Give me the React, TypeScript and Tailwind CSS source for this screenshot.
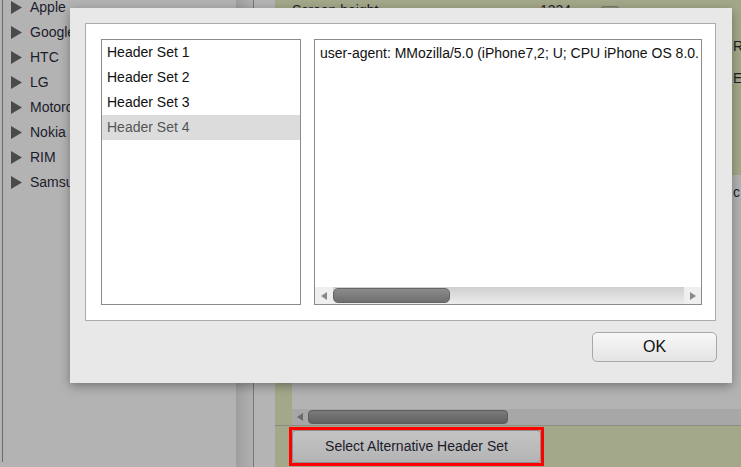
import { useState } from "react"

const vendors = ["Apple", "Google", "HTC", "LG", "Motorola", "Nokia", "RIM", "Samsung"]
const headerSets = ["Header Set 1", "Header Set 2", "Header Set 3", "Header Set 4"]

function Arrow({ dir, color }: { dir: "left" | "right"; color: string }) {
  return (
    <svg width="6" height="8" viewBox="0 0 6 8">
      {dir === "left" ? (
        <polygon points="6,0 6,8 0,4" fill={color} />
      ) : (
        <polygon points="0,0 0,8 6,4" fill={color} />
      )}
    </svg>
  )
}

export default function App() {
  const [selected, setSelected] = useState(3)

  return (
    <div
      className="relative w-[741px] h-[467px] overflow-hidden flex text-[14px]"
      style={{ fontFamily: '"Liberation Sans", Arial, sans-serif' }}
    >
      {/* device tree */}
      <div className="w-[236px] shrink-0 h-full bg-[#b3b3b3] pl-[2px]">
        <div className="h-full border-l border-[#6b6b6b] -mt-[5px]">
          {vendors.map((v) => (
            <div key={v} className="h-[25px] flex items-center gap-[8px] pl-[8px] text-[#1c1c2c]">
              <svg width="11" height="13" viewBox="0 0 11 13">
                <polygon points="0,0 11,6.5 0,13" fill="#4a4a4a" />
              </svg>
              <span>{v}</span>
            </div>
          ))}
        </div>
      </div>

      {/* splitter */}
      <div className="w-[18px] shrink-0 h-full bg-gradient-to-r from-[#9f9f9f] to-[#b0b0b0] border-r border-[#767676]" />
      <div className="w-[21px] shrink-0 h-full bg-[#b4b4b4]" />

      {/* details */}
      <div className="flex-1 min-w-0 overflow-hidden h-full bg-[#a4a88a] flex flex-col">
        <div className="h-[175px] shrink-0 pl-[17px] pt-[1px] text-[#1c1c2c] whitespace-nowrap">
          <div className="flex items-center h-[18px]">
            <span className="w-[248px] shrink-0">Screen height</span>
            <span className="w-[60px] shrink-0">1334</span>
            <span className="w-[20px] h-[8px] shrink-0 rounded-full bg-[#8d8f7c] border border-[#7a7b6c]" />
          </div>
          <div className="flex h-[18px] mt-[18px] items-center">
            <span className="ml-[441px]">Res</span>
          </div>
          <div className="flex h-[18px] mt-[14px] items-center">
            <span className="ml-[441px]">Ex</span>
          </div>
        </div>
        <div className="h-[250px] shrink-0 ml-[17px] bg-[#b3b3b3] flex flex-col">
          <div className="flex-1 pt-[7px] pl-[441px] text-[#1c1c2c]">c</div>
          <div className="h-[16px] flex items-center bg-[#a7a7a7]">
            <div className="w-[16px] flex justify-center">
              <Arrow dir="left" color="#6a6a6a" />
            </div>
            <div className="w-[200px] h-[14px] rounded-[4px] bg-gradient-to-b from-[#7a7a7a] to-[#626262] border border-[#5c5c5c]" />
          </div>
        </div>
        <div className="flex-1 border-t border-[#8c8c84] pl-[14px] pt-[1px]">
          <div className="w-[255px] h-[39px] border-[3px] border-[#ff0000]">
            <button className="w-full h-full rounded-[4px] border border-[#8e8e8e] bg-gradient-to-b from-[#c4c4c4] to-[#b4b4b4] text-[#1c1c2c] text-[14px]">
              Select Alternative Header Set
            </button>
          </div>
        </div>
      </div>

      {/* modal dialog */}
      <div className="absolute left-[70px] top-[8px] w-[662px] h-[375px] bg-[#e8e8e8] shadow-[0_3px_10px_rgba(0,0,0,0.35)] pt-[15px] pl-[15px] pr-[16px]">
        <div className="h-[298px] bg-white border border-[#acacac] flex gap-[13px] pt-[15px] pl-[15px]">
          <div className="w-[200px] h-[266px] border border-[#8a8a8a]">
            {headerSets.map((h, i) => (
              <div
                key={h}
                onClick={() => setSelected(i)}
                className={
                  i === selected
                    ? "h-[25px] flex items-center pl-[5px] bg-[#dcdcdc] text-[#555555]"
                    : "h-[25px] flex items-center pl-[5px] text-[#111111]"
                }
              >
                {h}
              </div>
            ))}
          </div>
          <div className="w-[388px] h-[266px] border border-[#8a8a8a] flex flex-col">
            <div className="flex-1 overflow-hidden whitespace-nowrap pl-[5px] pt-[3px] text-[#111111]">
              user-agent: MMozilla/5.0 (iPhone7,2; U; CPU iPhone OS 8.0.
            </div>
            <div className="h-[17px] flex items-center bg-gradient-to-b from-[#cfcfcf] to-[#ececec]">
              <div className="w-[18px] h-full flex items-center justify-center bg-[#efefef]">
                <Arrow dir="left" color="#8a8a8a" />
              </div>
              <div className="w-[117px] h-[15px] rounded-[5px] bg-gradient-to-b from-[#8c8c8c] to-[#6e6e6e] border border-[#666666]" />
              <div className="flex-1" />
              <div className="w-[17px] h-full flex items-center justify-center bg-[#efefef]">
                <Arrow dir="right" color="#8a8a8a" />
              </div>
            </div>
          </div>
        </div>
        <div className="flex justify-end mt-[11px] mr-[-1px]">
          <button className="w-[125px] h-[30px] rounded-[5px] border border-[#a8a8a8] bg-gradient-to-b from-[#f7f7f7] to-[#e4e4e4] text-[16px] text-[#111111]">
            OK
          </button>
        </div>
      </div>
    </div>
  )
}
